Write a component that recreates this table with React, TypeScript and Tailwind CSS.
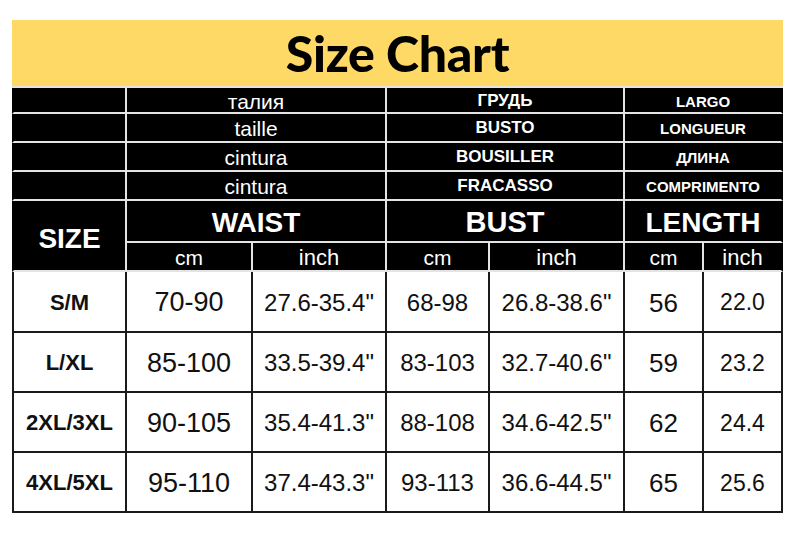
import type { ReactNode } from "react";

const langRows: { waist: string; bust: string; length: string }[] = [
  { waist: "талия", bust: "ГРУДЬ", length: "LARGO" },
  { waist: "taille", bust: "BUSTO", length: "LONGUEUR" },
  { waist: "cintura", bust: "BOUSILLER", length: "ДЛИНА" },
  { waist: "cintura", bust: "FRACASSO", length: "COMPRIMENTO" },
];

const sizes = [
  { size: "S/M", wcm: "70-90", win: '27.6-35.4"', bcm: "68-98", bin: '26.8-38.6"', lcm: "56", lin: "22.0" },
  { size: "L/XL", wcm: "85-100", win: '33.5-39.4"', bcm: "83-103", bin: '32.7-40.6"', lcm: "59", lin: "23.2" },
  { size: "2XL/3XL", wcm: "90-105", win: '35.4-41.3"', bcm: "88-108", bin: '34.6-42.5"', lcm: "62", lin: "24.4" },
  { size: "4XL/5XL", wcm: "95-110", win: '37.4-43.3"', bcm: "93-113", bin: '36.6-44.5"', lcm: "65", lin: "25.6" },
];

// header cell: black with light grid lines
function H({ className = "", children }: { className?: string; children?: ReactNode }) {
  return (
    <div className={`flex items-center justify-center bg-black text-white border-r-2 border-b-2 border-[#e4e4e4] leading-none ${className}`}>
      {children}
    </div>
  );
}

// body cell: white with black grid lines
function B({ className = "", children }: { className?: string; children?: ReactNode }) {
  return (
    <div className={`flex items-center justify-center bg-white text-[#111] border-r-2 border-b-2 border-[#1a1a1a] leading-none pt-[2px] ${className}`}>
      {children}
    </div>
  );
}

export default function App() {
  return (
    <div className="w-[800px] h-[535px] bg-white pt-5 pl-3 font-['Liberation_Sans',Arial,sans-serif]">
      <div className="w-[771px]">
        {/* Title banner */}
        <div className="h-[66px] bg-[#FFD966] flex items-center justify-center">
          <span className="font-['Lato',sans-serif] font-black text-[50px] text-black tracking-[-0.3px] leading-none">Size Chart</span>
        </div>

        {/* Table */}
        <div className="grid grid-cols-[115px_126px_134px_103px_135px_79px_79px] grid-rows-[26px_29px_29px_29px_42px_29px_61px_60px_60px_60px] border-t-2 border-[#e4e4e4]">
          {langRows.map((r, i) => (
            <div key={i} className="contents">
              <H className="border-l-2 border-l-black" />
              <H className="col-span-2 text-[21px] pt-[2px]">{r.waist}</H>
              <H className="col-span-2 text-[17px] font-bold">{r.bust}</H>
              <H className="col-span-2 text-[15px] font-bold border-r-black pt-[2px]">{r.length}</H>
            </div>
          ))}

          <H className="row-span-2 border-l-2 border-l-black text-[28px] font-bold pt-[6px]">SIZE</H>
          <H className="col-span-2 text-[28px] font-bold pt-[3px]">WAIST</H>
          <H className="col-span-2 text-[29px] font-bold pt-[3px]">BUST</H>
          <H className="col-span-2 text-[28px] font-bold border-r-black pt-[3px]">LENGTH</H>

          <H className="text-[21px] pt-[2px]">cm</H>
          <H className="text-[22px] pt-[2px]">inch</H>
          <H className="text-[21px] pt-[2px]">cm</H>
          <H className="text-[22px] pt-[2px]">inch</H>
          <H className="text-[21px] pt-[2px]">cm</H>
          <H className="text-[22px] pt-[2px] border-r-black">inch</H>

          {sizes.map((s) => (
            <div key={s.size} className="contents">
              <B className="border-l-2 text-[22px] font-bold">{s.size}</B>
              <B className="text-[27px]">{s.wcm}</B>
              <B className="text-[24px]">{s.win}</B>
              <B className="text-[24px]">{s.bcm}</B>
              <B className="text-[24px]">{s.bin}</B>
              <B className="text-[26px]">{s.lcm}</B>
              <B className="text-[23px]">{s.lin}</B>
            </div>
          ))}
        </div>
      </div>
    </div>
  );
}
